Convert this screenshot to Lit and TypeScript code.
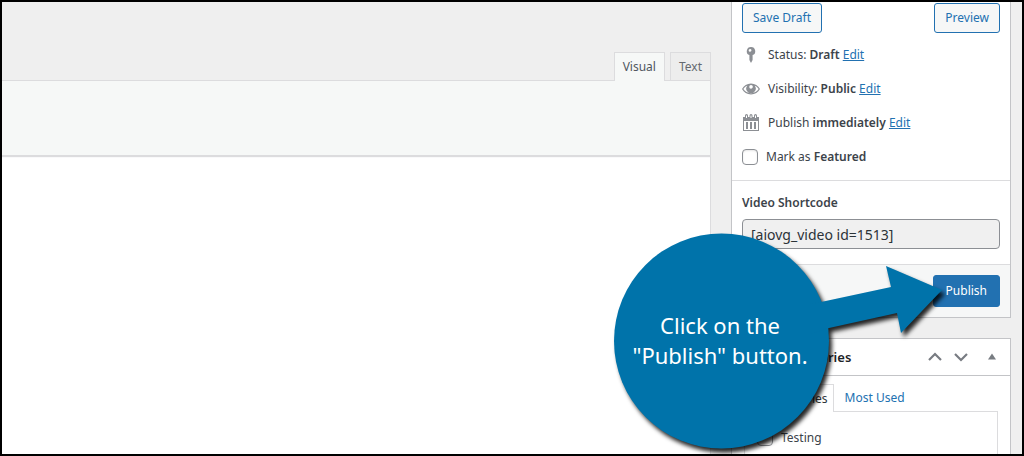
import { LitElement, html, css } from "lit";
import { customElement, state } from "lit/decorators.js";

@customElement("editor-pane")
class EditorPane extends LitElement {
  static styles = css`
    :host {
      display: flex;
      flex-direction: column;
      padding-top: 50px;
      box-sizing: border-box;
    }
    .tabs {
      display: flex;
      justify-content: flex-end;
      gap: 5px;
    }
    .tab {
      height: 28px;
      padding: 0 8px;
      border: 1px solid #dcdcde;
      border-bottom: 0;
      background: #ededed;
      color: #646970;
      font: 12px/26px "Noto Sans", sans-serif;
    }
    .tab.active {
      position: relative;
      height: 29px;
      margin-bottom: -1px;
      background: #f6f8f7;
      color: #50575e;
    }
    .editor {
      flex: 1;
      display: flex;
      flex-direction: column;
      border: 1px solid #dcdcde;
      border-left: 0;
      border-bottom: 0;
      background: #fff;
    }
    .toolbar {
      height: 74px;
      border-bottom: 1px solid #dcdcde;
      background: #f6f8f7;
      box-shadow: 0 1px 1px #dcdcde;
    }
  `;
  render() {
    return html`
      <div class="tabs">
        <button class="tab active" type="button">Visual</button>
        <button class="tab" type="button">Text</button>
      </div>
      <div class="editor"><div class="toolbar"></div></div>
    `;
  }
}

@customElement("publish-box")
class PublishBox extends LitElement {
  @state() featured = false;

  static styles = css`
    :host {
      display: block;
      border: 1px solid #c3c4c7;
      border-top: 0;
      background: #fff;
      color: #3c434a;
      font: 12px/20px "Noto Sans", sans-serif;
    }
    .actions {
      display: flex;
      justify-content: space-between;
      padding: 1px 10px 5px;
    }
    .btn {
      height: 30px;
      padding: 0 10px;
      border: 1px solid #2271b1;
      border-radius: 3px;
      background: #f6f7f7;
      color: #2271b1;
      font: inherit;
    }
    .primary {
      height: 32px;
      padding: 0 12px;
      background: #2271b1;
      color: #fff;
    }
    .row {
      display: flex;
      align-items: center;
      height: 34px;
      padding: 0 10px;
      white-space: pre;
    }
    .row svg {
      width: 18px;
      height: 18px;
      margin-right: 8px;
      fill: #8c8f94;
    }
    b {
      font-weight: 600;
    }
    a {
      color: #2271b1;
    }
    .check {
      appearance: none;
      width: 16px;
      height: 16px;
      margin: 0 8px 0 0;
      border: 1px solid #8c8f94;
      border-radius: 4px;
      background: #fff;
      box-shadow: inset 0 1px 2px rgba(0, 0, 0, 0.1);
    }
    .check:checked {
      background: #2271b1;
    }
    .shortcode {
      margin-top: 6px;
      padding: 12px 10px 15px;
      border-top: 1px solid #dcdcde;
    }
    .shortcode label {
      display: block;
      margin-bottom: 6px;
      font-weight: 600;
    }
    .field {
      display: block;
      width: 100%;
      height: 30px;
      box-sizing: border-box;
      padding: 0 8px;
      border: 1px solid #8c8f94;
      border-radius: 4px;
      background: #f0f0f0;
      color: #2c3338;
      font: 14px "Noto Sans", sans-serif;
    }
    .footer {
      display: flex;
      justify-content: flex-end;
      padding: 10px;
      border-top: 1px solid #dcdcde;
      background: #f6f7f7;
    }
  `;
  render() {
    return html`
      <div class="actions">
        <button class="btn" type="button">Save Draft</button>
        <button class="btn" type="button">Preview</button>
      </div>
      <div class="rows">
        <div class="row">
          <svg viewBox="0 0 18 18" aria-hidden="true">
            <path
              fill-rule="evenodd"
              d="M9 1a4.2 4.2 0 0 1 1.6 8.1v5L9 17l-1.6-2.9v-5A4.2 4.2 0 0 1 9 1zM8 3a1.4 1.4 0 1 0 .1 2.8A1.4 1.4 0 0 0 8 3z"
            />
          </svg>
          <span>Status: <b>Draft</b> <a href="#status">Edit</a></span>
        </div>
        <div class="row">
          <svg viewBox="0 0 18 18" aria-hidden="true">
            <path
              fill-rule="evenodd"
              d="M9 3.600c4 0 7.200 2.100 9 5.400-1.800 3.300-5 5.400-9 5.400S1.800 12.300 0 9c1.800-3.300 5-5.400 9-5.400zM5.200 5.700C3.600 6.400 2.300 7.500 1.400 9c1.600 2.500 4.300 4.100 7.600 4.100s6-1.600 7.600-4.100c-.9-1.500-2.200-2.600-3.800-3.300a4.700 4.700 0 1 1-7.600 0zM9 5.100A1.800 1.800 0 1 0 9.100 8.700 1.800 1.800 0 0 0 9 5.100z"
            />
          </svg>
          <span>Visibility: <b>Public</b> <a href="#visibility">Edit</a></span>
        </div>
        <div class="row">
          <svg viewBox="0 0 18 18" aria-hidden="true">
            <path
              fill-rule="evenodd"
              d="M1 3h2V1.500a1.500 1.500 0 0 1 3 0V3h1.500V1.500a1.500 1.500 0 0 1 3 0V3H12V1.500a1.500 1.500 0 0 1 3 0V3h2v14H1zM4 1.500V4h1V1.500zM8.500 1.500V4h1V1.500zM13 1.500V4h1V1.500zM2 7V16h14V7zM4 8h2v7H4zM8 8h2v7H8zM12 8h2v7h-2z"
            />
          </svg>
          <span>Publish <b>immediately</b> <a href="#schedule">Edit</a></span>
        </div>
        <div class="row">
          <input
            id="featured"
            class="check"
            type="checkbox"
            .checked=${this.featured}
            @change=${() => (this.featured = !this.featured)}
          />
          <label for="featured">Mark as <b>Featured</b></label>
        </div>
      </div>
      <div class="shortcode">
        <label for="code">Video Shortcode</label>
        <input id="code" class="field" type="text" readonly value="[aiovg_video id=1513]" />
      </div>
      <div class="footer">
        <button class="btn primary" type="button">Publish</button>
      </div>
    `;
  }
}

@customElement("categories-box")
class CategoriesBox extends LitElement {
  static styles = css`
    :host {
      display: block;
      border: 1px solid #c3c4c7;
      background: #fff;
      color: #3c434a;
      font: 12px/20px "Noto Sans", sans-serif;
    }
    .head {
      display: flex;
      align-items: center;
      height: 36px;
      padding: 0 6px 0 12px;
      border-bottom: 1px solid #c3c4c7;
    }
    h2 {
      flex: 1;
      margin: 0;
      color: #1d2327;
      font-size: 13px;
      font-weight: 600;
    }
    .order {
      display: flex;
      width: 26px;
      padding: 0;
      border: 0;
      background: none;
      justify-content: center;
    }
    .order svg {
      width: 16px;
      height: 16px;
      fill: none;
      stroke: #787c82;
      stroke-width: 2.2;
    }
    .toggle {
      margin-left: 6px;
      width: 24px;
    }
    .toggle svg {
      fill: #787c82;
      stroke: none;
    }
    .body {
      padding: 8px 12px 12px;
    }
    .tabs {
      display: flex;
    }
    .tab {
      height: 27px;
      padding: 0 11px;
      border: 0;
      background: none;
      color: #2271b1;
      font: inherit;
    }
    .tab.active {
      position: relative;
      height: 28px;
      margin-bottom: -1px;
      padding: 0 5px;
      border: 1px solid #dcdcde;
      border-bottom: 0;
      background: #fff;
      color: #2c3338;
    }
    .panel {
      padding: 16px 12px 40px;
      border: 1px solid #dcdcde;
    }
    .item {
      display: flex;
      align-items: center;
      gap: 8px;
    }
    .check {
      appearance: none;
      width: 16px;
      height: 16px;
      margin: 0;
      border: 1px solid #8c8f94;
      border-radius: 4px;
      background: #fff;
    }
    .check:checked {
      background: #2271b1;
    }
  `;
  render() {
    return html`
      <div class="head">
        <h2>Video Categories</h2>
        <button class="order" type="button" aria-label="Move up">
          <svg viewBox="0 0 16 16"><path d="M2 11l6-6 6 6" /></svg>
        </button>
        <button class="order" type="button" aria-label="Move down">
          <svg viewBox="0 0 16 16"><path d="M2 5l6 6 6-6" /></svg>
        </button>
        <button class="order toggle" type="button" aria-label="Toggle panel">
          <svg viewBox="0 0 16 16"><path d="M4 10.500l4-6 4 6z" /></svg>
        </button>
      </div>
      <div class="body">
        <div class="tabs">
          <button class="tab active" type="button">All Categories</button>
          <button class="tab" type="button">Most Used</button>
        </div>
        <div class="panel">
          <div class="item">
            <input id="testing" class="check" type="checkbox" />
            <label for="testing">Testing</label>
          </div>
        </div>
      </div>
    `;
  }
}

@customElement("app-root")
class AppRoot extends LitElement {
  static styles = css`
    :host {
      position: relative;
      display: flex;
      gap: 20px;
      box-sizing: border-box;
      height: 100vh;
      padding-right: 11px;
      overflow: hidden;
      border: 2px solid #000;
      background: #efefef;
    }
    editor-pane {
      flex: 1;
      min-width: 0;
    }
    .side {
      display: flex;
      flex-direction: column;
      gap: 20px;
      flex: 0 0 280px;
    }
    .callout {
      position: absolute;
      top: 228px;
      right: 72px;
      width: 340px;
      height: 224px;
      pointer-events: none;
    }
    .shape {
      position: absolute;
      inset: 0;
      width: 100%;
      height: 100%;
      overflow: visible;
      fill: #0073aa;
      filter: drop-shadow(3px 4px 2px rgba(0, 0, 0, 0.85));
    }
    .message {
      position: relative;
      display: flex;
      align-items: center;
      justify-content: center;
      width: 220px;
      height: 220px;
      margin: 0;
      color: #fff;
      font: 22px/30px "Noto Sans", sans-serif;
      text-align: center;
      white-space: nowrap;
    }
  `;
  render() {
    return html`
      <editor-pane></editor-pane>
      <div class="side">
        <publish-box></publish-box>
        <categories-box></categories-box>
      </div>
      <div class="callout">
        <svg class="shape" viewBox="0 0 340 224" aria-hidden="true">
          <circle cx="111.500" cy="111" r="107.500" />
          <path d="M200 74L211 72L281 57L276 36L332 60L291 103L287 83L219 98L200 104z" />
        </svg>
        <p class="message">Click on the<br />"Publish" button.</p>
      </div>
    `;
  }
}
